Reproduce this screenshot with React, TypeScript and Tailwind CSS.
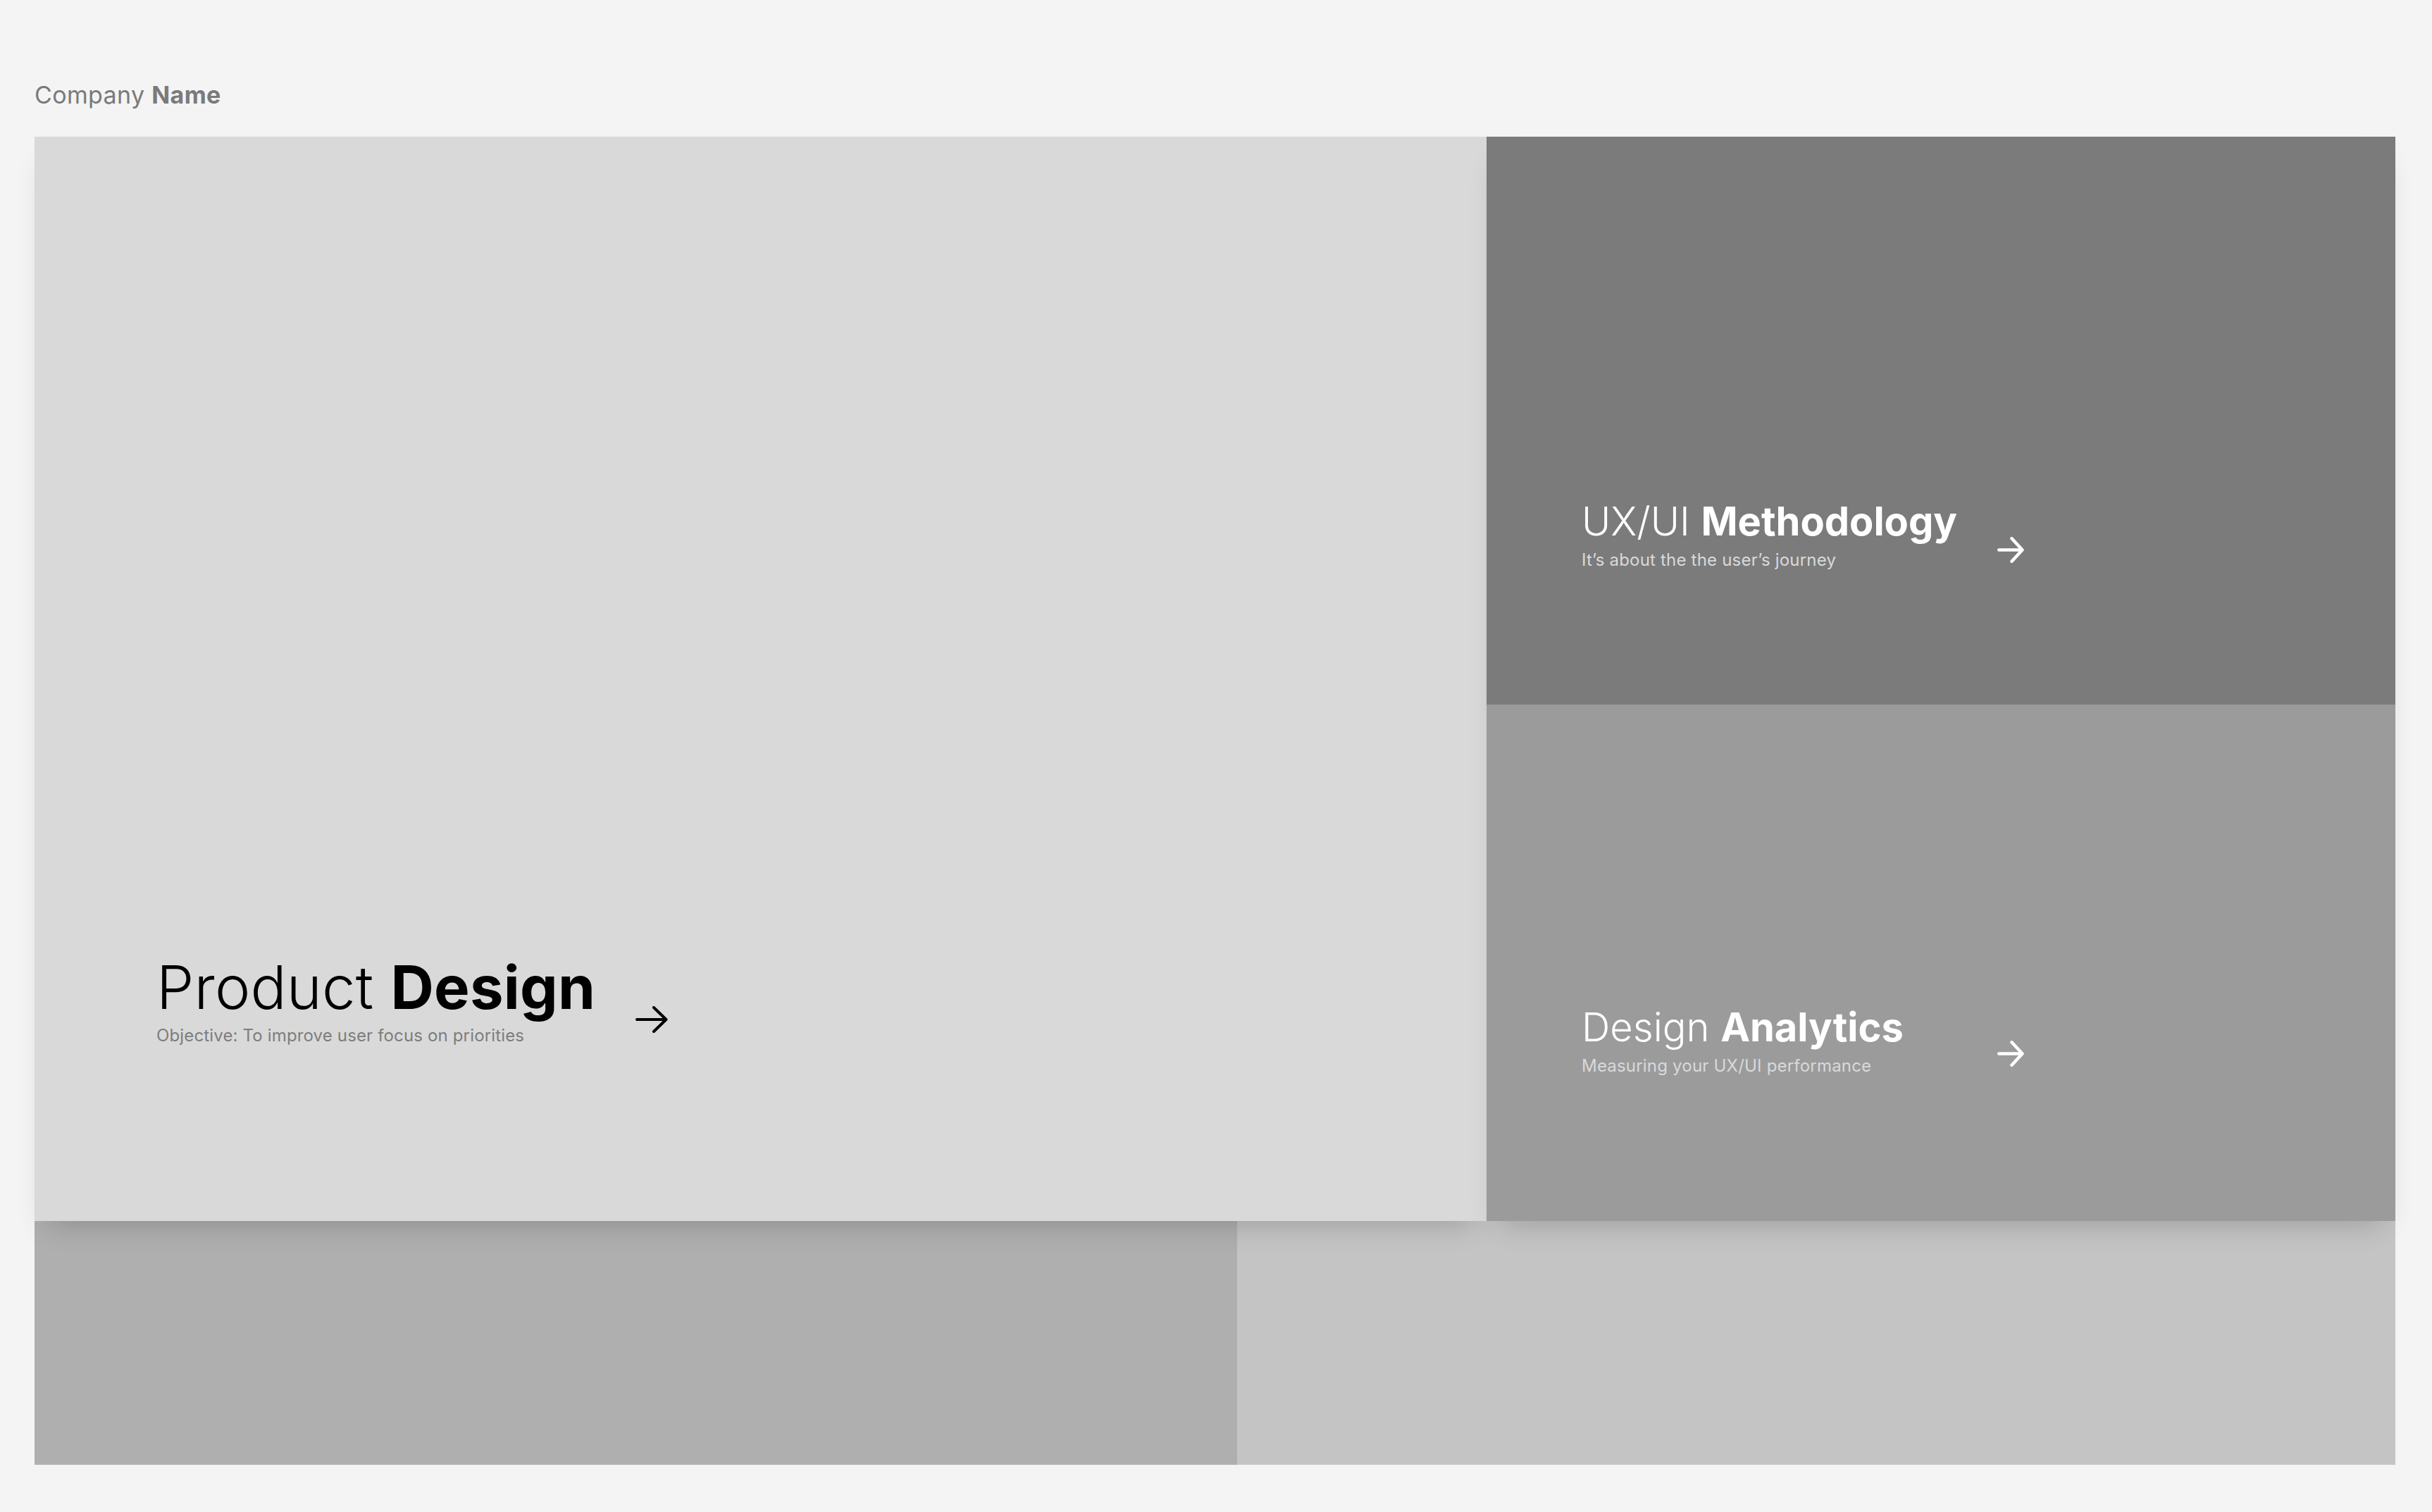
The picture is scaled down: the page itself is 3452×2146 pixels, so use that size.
import React from "react";

const font = { fontFamily: "Inter, 'Noto Sans', sans-serif" };

function ArrowBig({ className }: { className?: string }) {
  return (
    <svg width="46" height="38" viewBox="0 0 46 38" fill="none" className={className}>
      <path d="M2 19 H43 M26 2 L43.5 19 L26 36" stroke="currentColor" strokeWidth="4" strokeLinecap="round" strokeLinejoin="round" />
    </svg>
  );
}

function ArrowSmall({ className }: { className?: string }) {
  return (
    <svg width="38" height="37" viewBox="0 0 38 37" fill="none" className={className}>
      <path d="M2.25 18.5 H35 M20.5 2.25 L35.5 18.5 L20.5 34.75" stroke="currentColor" strokeWidth="4.5" strokeLinecap="round" strokeLinejoin="round" />
    </svg>
  );
}

export default function App() {
  return (
    <div className="min-h-screen w-full bg-[#f4f4f4] pl-[49px] pr-[52px] pt-[118px]" style={font}>
      <div className="text-[34px] leading-none tracking-[0.35px] text-[#7a7a7a] mb-[42px]">
        Company <span className="font-bold">Name</span>
      </div>

      <div className="flex h-[1539px]">
        <div className="relative z-10 w-[2061px] bg-[#d9d9d9] flex flex-col justify-end pl-[173px] pb-[251px] shadow-[0_22px_40px_-18px_rgba(0,0,0,0.2)]">
          <div className="flex items-end">
            <div className="flex flex-col whitespace-nowrap">
              <div className="text-[85px] leading-none text-black tracking-[0.2px]">
                <span className="font-light">Product </span>
                <span className="font-bold">Design</span>
              </div>
              <div className="mt-[14px] text-[24px] leading-none tracking-[0.15px] text-[#7d7d7d]">
                Objective: To improve user focus on priorities
              </div>
            </div>
            <ArrowBig className="ml-[57px] mb-[16px] text-black" />
          </div>
        </div>

        <div className="relative z-10 flex-1 flex flex-col shadow-[0_22px_40px_-18px_rgba(0,0,0,0.2)]">
          <div className="h-[806px] bg-[#7b7b7b] flex flex-col justify-end pl-[135px] pb-[193px]">
            <div className="flex items-end">
              <div className="w-[590px] flex flex-col whitespace-nowrap">
                <div className="text-[56px] leading-none text-white">
                  <span className="font-light">UX/UI </span>
                  <span className="font-bold">Methodology</span>
                </div>
                <div className="mt-[15px] text-[24px] leading-none tracking-[0.2px] text-[#d9d9d9]">
                  It’s about the the user’s journey
                </div>
              </div>
              <ArrowSmall className="mb-[8px] text-white" />
            </div>
          </div>
          <div className="flex-1 bg-[#9b9b9b] flex flex-col justify-end pl-[135px] pb-[208px]">
            <div className="flex items-end">
              <div className="w-[590px] flex flex-col whitespace-nowrap">
                <div className="text-[56px] leading-none text-white">
                  <span className="font-light">Design </span>
                  <span className="font-bold">Analytics</span>
                </div>
                <div className="mt-[15px] text-[24px] leading-none tracking-[0.2px] text-[#d9d9d9]">
                  Measuring your UX/UI performance
                </div>
              </div>
              <ArrowSmall className="mb-[11px] text-white" />
            </div>
          </div>
        </div>
      </div>

      <div className="flex h-[346px]">
        <div className="w-[1707px] bg-[#afafaf]" />
        <div className="flex-1 bg-[#c4c4c4]" />
      </div>
    </div>
  );
}
